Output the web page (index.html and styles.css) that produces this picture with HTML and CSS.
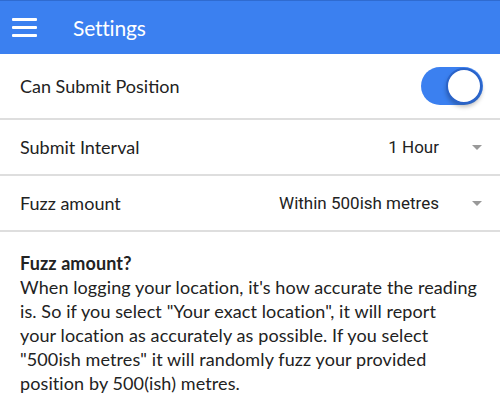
FILE: index.html
```html
<!DOCTYPE html>
<html>
<head>
<meta charset="utf-8">
<link rel="stylesheet" href="styles.css">
</head>
<body>
<header class="toolbar">
  <div class="menu-btn"><span></span><span></span><span></span></div>
  <div class="title">Settings</div>
</header>
<main>
  <div class="item item-toggle">
    <div class="label">Can Submit Position</div>
    <div class="toggle"><div class="knob"></div></div>
  </div>
  <div class="item">
    <div class="label">Submit Interval</div>
    <div class="select"><span class="value">1 Hour</span><span class="arrow"></span></div>
  </div>
  <div class="item">
    <div class="label">Fuzz amount</div>
    <div class="select"><span class="value">Within 500ish metres</span><span class="arrow"></span></div>
  </div>
  <div class="note">
    <div class="note-title">Fuzz amount?</div>
    <p>When logging your location, it's how accurate the reading<br>is. So if you select "Your exact location", it will report<br>your location as accurately as possible. If you select<br>"500ish metres" it will randomly fuzz your provided<br>position by 500(ish) metres.</p>
  </div>
</main>
</body>
</html>
```
FILE: styles.css
```css
* { box-sizing: border-box; }
html, body { margin: 0; padding: 0; background: #fff; }
body {
  font-family: "Lato", "Open Sans", sans-serif;
  color: #222;
  width: 500px;
  height: 417px;
  overflow: hidden;
}
.toolbar {
  height: 54px;
  background: #3b80f0;
  border-top: 1px solid #2f6bd0;
  display: flex;
  align-items: center;
  color: #fff;
}
.menu-btn {
  width: 25px;
  margin-left: 12px;
  display: flex;
  flex-direction: column;
  gap: 5px;
}
.menu-btn span {
  display: block;
  height: 3px;
  background: #fff;
  border-radius: 1px;
}
.title {
  margin-left: 36px;
  font-size: 21px;
  letter-spacing: -0.2px;
}
.item {
  display: flex;
  align-items: center;
  height: 56px;
  padding-left: 20px;
  border-bottom: 2px solid #dedede;
}
.item-toggle { height: 66px; }
.label {
  flex: 1;
  font-size: 18px;
  color: #222;
}
.toggle {
  width: 62px;
  height: 38px;
  margin-right: 17px;
  background: #3b80f0;
  border-radius: 19px;
  position: relative;
}
.knob {
  position: absolute;
  right: 1px;
  top: 1px;
  width: 36px;
  height: 36px;
  border-radius: 50%;
  background: #fff;
  border: 2px solid #2a63c9;
  box-shadow: 0 3px 4px rgba(0,0,0,0.25);
}
.select {
  display: flex;
  align-items: center;
  font-family: "Roboto", sans-serif;
  font-size: 17px;
  color: #222;
}
.arrow {
  width: 0;
  height: 0;
  margin-left: 33px;
  margin-right: 18px;
  border-top: 5px solid #999;
  border-left: 5px solid transparent;
  border-right: 5px solid transparent;
}
.note {
  padding: 19px 10px 0 20px;
  font-size: 18px;
  line-height: 24px;
  letter-spacing: 0.1px;
  color: #222;
}
.note-title { font-weight: bold; }
.note p { margin: 0; }
```
